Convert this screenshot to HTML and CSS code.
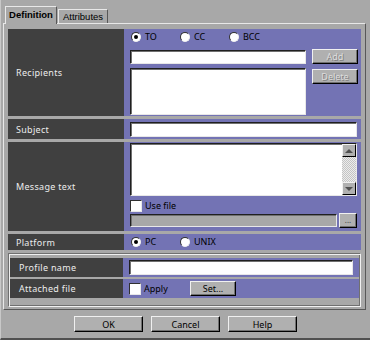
FILE: index.html
```html
<!DOCTYPE html>
<html>
<head>
<meta charset="utf-8">
<link rel="stylesheet" href="styles.css">
</head>
<body>
<div class="win">
  <div class="tabs">
    <div class="tab active">Definition</div>
    <div class="tab">Attributes</div>
  </div>
  <div class="panel">
    <div class="row rec">
      <div class="lab">Recipients</div>
      <div class="val">
        <div class="radios">
          <span class="opt"><span class="radio on"></span>TO</span>
          <span class="opt"><span class="radio"></span>CC</span>
          <span class="opt"><span class="radio"></span>BCC</span>
        </div>
        <div class="recgrid">
          <div class="reccol">
            <div class="field rinput"></div>
            <div class="field rlist"></div>
          </div>
          <div class="btncol">
            <div class="btn dis small">Add</div>
            <div class="btn dis small">Delete</div>
          </div>
        </div>
      </div>
    </div>
    <div class="row subj">
      <div class="lab">Subject</div>
      <div class="val">
        <div class="field sinput"></div>
      </div>
    </div>
    <div class="row msg">
      <div class="lab">Message text</div>
      <div class="val">
        <div class="field marea">
          <div class="mtext"></div>
          <div class="sbar">
            <div class="sbtn"><span class="arr up"></span></div>
            <div class="strack"></div>
            <div class="sbtn dn"><span class="arr down"></span></div>
          </div>
        </div>
        <div class="chkrow"><span class="chk"></span>Use file</div>
        <div class="filerow">
          <div class="field ffile"></div>
          <div class="btn dots">...</div>
        </div>
      </div>
    </div>
    <div class="row plat">
      <div class="lab">Platform</div>
      <div class="val">
        <div class="radios">
          <span class="opt"><span class="radio on"></span>PC</span>
          <span class="opt"><span class="radio"></span>UNIX</span>
        </div>
      </div>
    </div>
    <div class="group">
      <div class="row grow">
        <div class="lab">Profile name</div>
        <div class="val">
          <div class="field pinput"></div>
        </div>
      </div>
      <div class="row grow">
        <div class="lab">Attached file</div>
        <div class="val arow">
          <span class="chk"></span><span class="apply">Apply</span>
          <div class="btn setbtn">Set...</div>
        </div>
      </div>
    </div>
  </div>
  <div class="footer">
    <div class="btn fbtn">OK</div>
    <div class="btn fbtn">Cancel</div>
    <div class="btn fbtn">Help</div>
  </div>
</div>
</body>
</html>
```
FILE: styles.css
```css
* { box-sizing: border-box; margin: 0; padding: 0; }
html, body { width: 370px; height: 340px; overflow: hidden; }
body {
  background: #a8a8a8;
  font-family: "Noto Sans", "DejaVu Sans", sans-serif;
  font-size: 9px;
  color: #000;
}
.win {
  width: 370px;
  height: 340px;
  display: flex;
  flex-direction: column;
  border-bottom: 2px solid #505050;
  border-left: 1px solid #c8c8c8;
}
.tabs {
  display: flex;
  align-items: flex-end;
  height: 23px;
  padding-left: 4px;
  position: relative;
  z-index: 1;
}
.tab {
  font-family: "Liberation Sans", Arial, sans-serif;
  font-size: 9.5px;
  height: 14px;
  width: 50px;
  border: 1px solid;
  border-color: #e8e8e8 #585858 transparent #e8e8e8;
  border-bottom: none;
  display: flex;
  align-items: center;
  justify-content: center;
  background: #a8a8a8;
  margin-left: 1px;
}
.tab.active {
  height: 18px;
  width: 52px;
  margin-bottom: -1px;
  margin-left: 0;
  font-weight: bold;
  padding-bottom: 2px;
}
.panel {
  margin-left: 2px;
  width: 363px;
  height: 287px;
  border: 1px solid;
  border-color: #e8e8e8 #585858 #585858 #e8e8e8;
  padding: 5px 4px 0 4px;
  display: flex;
  flex-direction: column;
  gap: 3px;
}
.row {
  display: flex;
}
.lab {
  width: 116px;
  background: #404040;
  color: #ececec;
  padding-left: 8px;
  display: flex;
  align-items: center;
  letter-spacing: 0.3px;
}
.val {
  flex: 1;
  background: #7373b4;
  padding-left: 6px;
}
.rec { height: 87px; }
.subj { height: 20px; }
.msg { height: 89px; }
.plat { height: 16px; }

.radios {
  display: flex;
  height: 10px;
  align-items: center;
}
.rec .radios { margin-top: 3px; }
.plat .val { display: flex; align-items: center; }
.opt {
  display: flex;
  align-items: center;
  width: 49px;
  gap: 4px;
  padding-left: 1px;
  line-height: 10px;
}
.radio {
  width: 10px;
  height: 10px;
  border-radius: 50%;
  background: #fff;
  border: 1px solid;
  border-color: #303030 #f0f0f0 #f0f0f0 #303030;
  display: flex;
  align-items: center;
  justify-content: center;
}
.radio.on::after {
  content: "";
  width: 4px;
  height: 4px;
  border-radius: 50%;
  background: #000;
}
.field {
  background: #fff;
  border: 1px solid;
  border-color: #202020 #e8e8e8 #e8e8e8 #202020;
  box-shadow: inset 1px 1px 0 #707070;
}
.recgrid {
  display: flex;
  margin-top: 7px;
}
.reccol { width: 176px; display: flex; flex-direction: column; }
.rinput { height: 14px; margin-top: 1px; }
.rlist { height: 47px; margin-top: 4px; }
.btncol {
  margin-left: 6px;
  display: flex;
  flex-direction: column;
  gap: 5px;
}
.btn {
  background: #b0b0b0;
  border: 1px solid;
  border-color: #f0f0f0 #000 #000 #f0f0f0;
  box-shadow: inset -1px -1px 0 #707070;
  display: flex;
  align-items: center;
  justify-content: center;
  line-height: 1;
}
.small { width: 46px; height: 15px; }
.dis {
  color: #dcdcdc;
  text-shadow: 1px 1px 0 #808080;
}
.sinput { width: 227px; height: 15px; margin-top: 3px; }
.marea {
  width: 227px;
  height: 53px;
  margin-top: 1px;
  display: flex;
}
.mtext { flex: 1; }
.sbar {
  width: 14px;
  display: flex;
  flex-direction: column;
}
.sbtn {
  height: 13px;
  background: #b0b0b0;
  border: 1px solid;
  border-color: #f0f0f0 #000 #000 #f0f0f0;
  display: flex;
  align-items: center;
  justify-content: center;
}
.sbtn.dn { height: 13px; }
.strack {
  flex: 1;
  background: repeating-conic-gradient(#c4c4c4 0 25%, #ececec 0 50%) 0 0 / 2px 2px;
}
.arr { width: 0; height: 0; border-left: 4px solid transparent; border-right: 4px solid transparent; }
.arr.up { border-bottom: 4px solid #505050; }
.arr.down { border-top: 4px solid #505050; }
.chkrow {
  display: flex;
  align-items: center;
  gap: 3px;
  margin-top: 3px;
  height: 13px;
}
.chk {
  width: 12px;
  height: 12px;
  background: #fff;
  border: 1px solid;
  border-color: #303030 #e8e8e8 #e8e8e8 #303030;
  display: inline-block;
}
.filerow {
  display: flex;
  align-items: center;
  margin-top: 1px;
  gap: 2px;
}
.ffile {
  width: 207px;
  height: 13px;
  background: #a8a8a8;
}
.dots {
  width: 18px;
  height: 15px;
  font-size: 8px;
  align-items: flex-end;
  padding-bottom: 3px;
  color: #404040;
}
.group {
  margin-top: 0;
  height: 54px;
  border: 1px solid;
  border-color: #707070 #f0f0f0 #f0f0f0 #707070;
  box-shadow: inset 1px 1px 0 #f0f0f0, inset -1px -1px 0 #707070;
  padding: 4px 1px 0 1px;
  display: flex;
  flex-direction: column;
  gap: 2px;
}
.grow { height: 19px; }
.grow .lab { width: 113px; padding-left: 9px; }
.grow .val { display: flex; align-items: center; }
.pinput { width: 224px; height: 15px; }
.arow { gap: 0; }
.apply { margin-left: 3px; width: 46px; }
.setbtn { width: 46px; height: 15px; }
.footer {
  display: flex;
  justify-content: center;
  gap: 8px;
  padding-top: 6px;
}
.fbtn { width: 69px; height: 16px; }
```
